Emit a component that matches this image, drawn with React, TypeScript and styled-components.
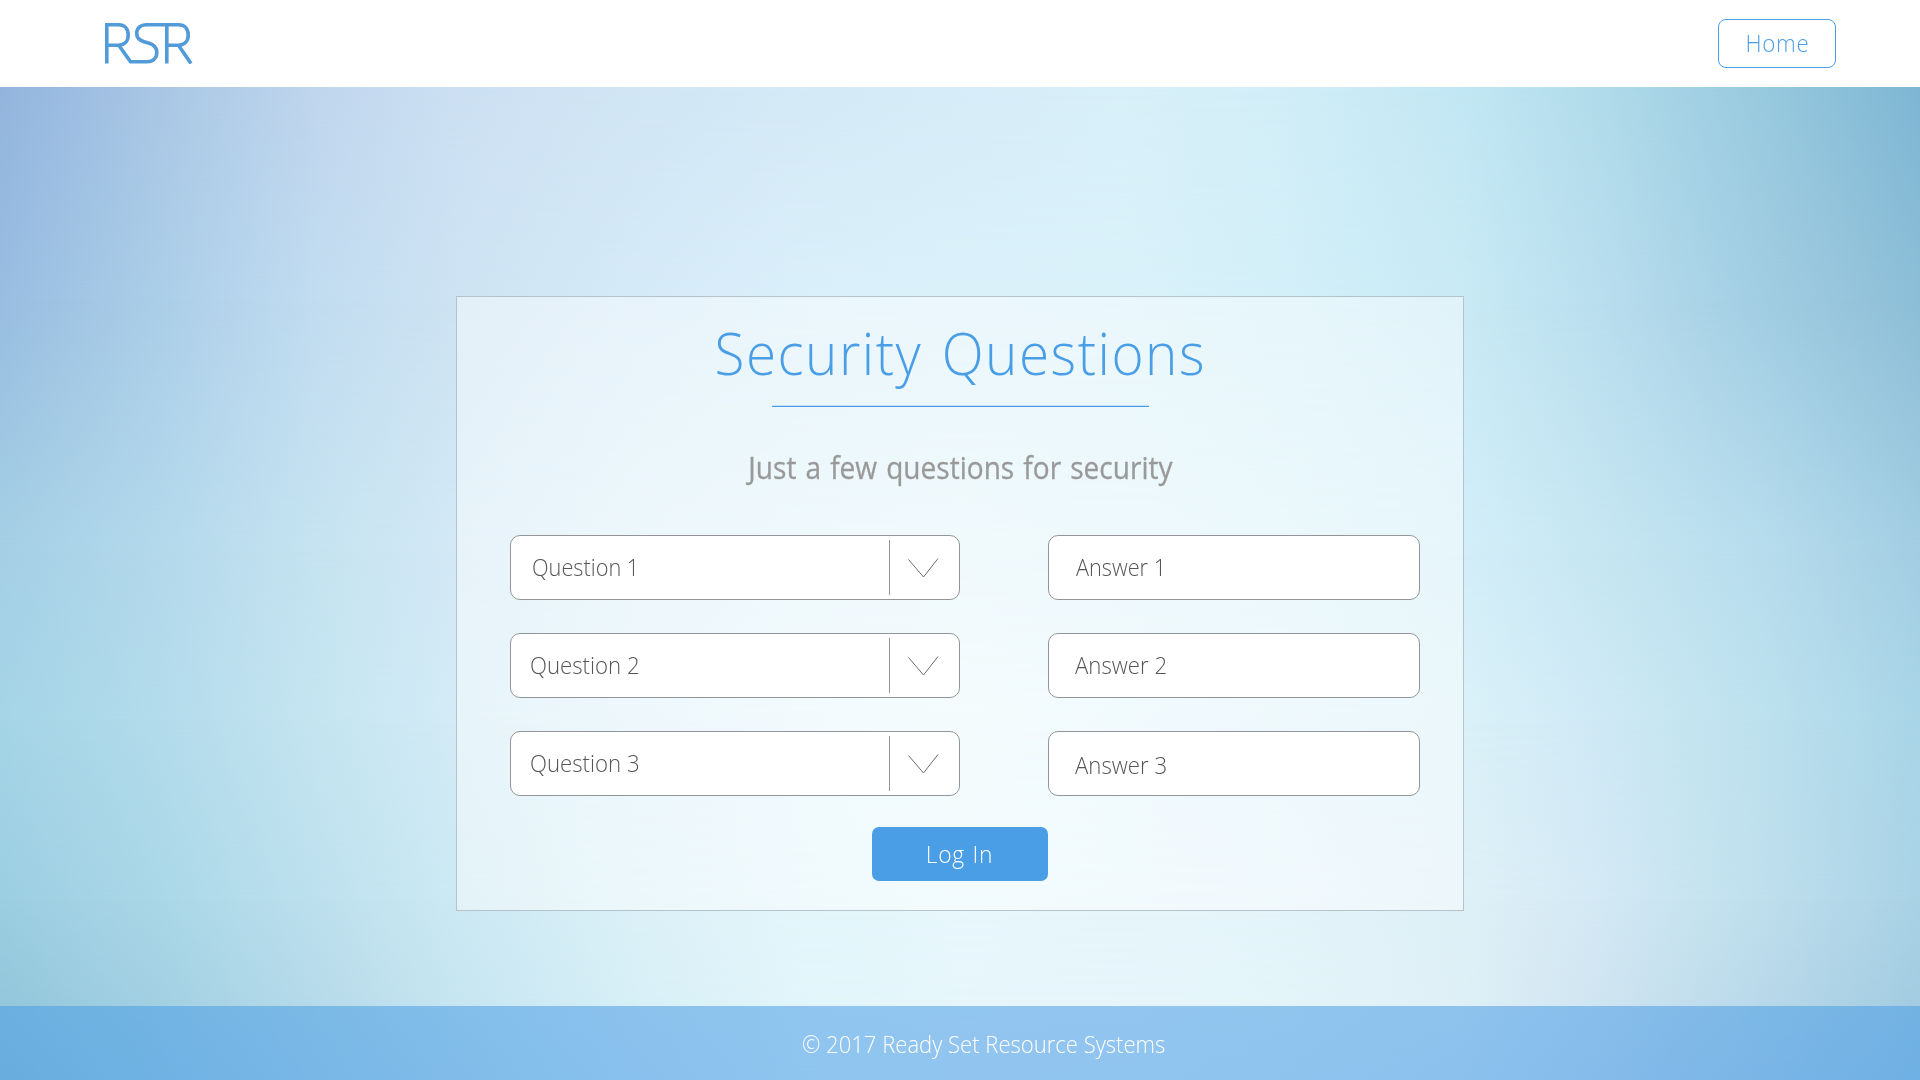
import React from "react";
import styled, { createGlobalStyle } from "styled-components";

const GlobalStyle = createGlobalStyle`
  *, *::before, *::after { box-sizing: border-box; }
  html, body { margin: 0; padding: 0; }
  body { font-family: "Open Sans", "Noto Sans", sans-serif; font-weight: 300; overflow: hidden; }
`;

const BLUE = "#4a9ee6";

/* Backdrop: rows of horizontal colour stops, each fading into the next. */
const STOPS = [0, 160, 320, 456, 640, 800, 960, 1120, 1280, 1464, 1600, 1760, 1920];
const ROWS: { y: number; colors: string[] }[] = [
  { y: 87, colors: ["#93b5de", "#a9c7e5", "#c0d6ed", "#cce0f3", "#d1e6f5", "#d4eaf6", "#d6edf8", "#d8f0f9", "#d2eef7", "#c2e7f4", "#b1dbea", "#98cadf", "#7fb6d3"] },
  { y: 300, colors: ["#98bde0", "#abcee8", "#c2dcf0", "#cde3f3", "#d5eaf7", "#d9eff9", "#daf1fa", "#d9f1f9", "#d3eff8", "#c8eaf5", "#b9deee", "#a2cde2", "#8cbed7"] },
  { y: 550, colors: ["#a5cfe5", "#b3d9eb", "#c6e3f1", "#d3e9f5", "#def1f9", "#e2f4f9", "#e4f5fa", "#e0f4fa", "#dbf3f9", "#d3eef8", "#c6e6f2", "#b7dded", "#a3cde2"] },
  { y: 720, colors: ["#a4d5e6", "#b3dbeb", "#c5e5f1", "#d3ebf5", "#e0f2f9", "#e7f6fb", "#ebf8fb", "#e6f6fb", "#e1f4fa", "#daf1f8", "#cfe9f5", "#bde1ee", "#a9d5e7"] },
  { y: 900, colors: ["#9bcee1", "#aad7e7", "#bde0ee", "#cce9f3", "#dcf1f8", "#e3f6fb", "#e8f7fc", "#e6f6fb", "#e4f4fa", "#def0f7", "#d3e9f4", "#bfdfed", "#a9d2e5"] },
  { y: 1006, colors: ["#93c6db", "#a2d0e2", "#b6dae9", "#c6e5f0", "#d7eff6", "#e1f5fa", "#e6f6fb", "#e6f5fb", "#e3f4f9", "#deeff6", "#cfe4f0", "#b8d8e9", "#a2cbe0"] },
  { y: 1080, colors: ["#8dbfd6", "#9ccbe0", "#afd5e9", "#c0dfee", "#d2ebf5", "#dff2f9", "#e4f4fa", "#e3f3fa", "#dff0f8", "#d8eaf5", "#c8def0", "#b2d1e8", "#9bc5e0"] },
];

const rowGradient = (colors: string[]) =>
  `linear-gradient(90deg, ${colors.map((c, i) => `${c} ${STOPS[i]}px`).join(", ")})`;

const Page = styled.div`
  display: grid;
  grid-template: 1080px / 1920px;
  width: 1920px;
  height: 1080px;
  overflow: hidden;
`;

const Wash = styled.div<{ $colors: string[]; $from?: number; $to: number }>`
  grid-area: 1 / 1;
  background: ${(p) => rowGradient(p.$colors)};
  ${(p) =>
    p.$from !== undefined &&
    `mask-image: linear-gradient(180deg, transparent ${p.$from}px, #000 ${p.$to}px);`}
`;

const Screen = styled.div`
  grid-area: 1 / 1;
  z-index: 1;
  display: grid;
  grid-template-rows: 87px 1fr 74px;
`;

/* Slightly condensed lettering. */
const Narrow = styled.span<{ $x: number; $origin?: string }>`
  display: inline-block;
  transform: scaleX(${(p) => p.$x});
  transform-origin: ${(p) => p.$origin ?? "center"};
  white-space: nowrap;
`;

const Header = styled.header`
  display: flex;
  justify-content: space-between;
  align-items: flex-start;
  padding: 19px 84px 0 105px;
  background: #fff;
`;

const Logo = styled.svg`
  display: block;
  margin-top: 4px;
`;

const HomeButton = styled.button`
  width: 118px;
  height: 49px;
  padding: 0 0 2px;
  border: 1px solid ${BLUE};
  border-radius: 8px;
  background: #fff;
  color: ${BLUE};
  font: 300 24px/44px "Open Sans", sans-serif;
  letter-spacing: 0.8px;
`;

const Main = styled.main`
  display: flex;
  justify-content: center;
  align-items: flex-start;
  padding-top: 209px;
`;

const Card = styled.section`
  width: 1008px;
  height: 615px;
  display: flex;
  flex-direction: column;
  align-items: center;
  border: 1px solid #b5c4cb;
  background: rgba(255, 255, 255, 0.45);
  background-clip: padding-box;
`;

const Title = styled.h1`
  margin: 13px 0 0;
  height: 95px;
  color: ${BLUE};
  font-size: 59px;
  line-height: 84px;
  font-weight: 300;
  letter-spacing: 1.6px;
  word-spacing: 4px;
`;

const Rule = styled.hr`
  width: 377px;
  height: 2px;
  margin: 0;
  border: 0;
  background: linear-gradient(#c4def5 50%, ${BLUE} 50%);
`;

const Subtitle = styled.p`
  margin: 39px 0 0;
  height: 89px;
  color: #999;
  font-size: 31px;
  line-height: 42px;
  font-weight: 400;
  -webkit-text-stroke: 0.3px #999;
  word-spacing: 2px;
`;

const Fields = styled.div`
  align-self: stretch;
  display: grid;
  grid-template-columns: 450px 372px;
  grid-auto-rows: 65px;
  column-gap: 88px;
  row-gap: 33px;
  padding-left: 53px;
`;

const Field = styled.div<{ $inset: number }>`
  display: flex;
  align-items: center;
  justify-content: space-between;
  padding-left: ${(p) => p.$inset}px;
  border: 1px solid #929699;
  border-radius: 10px;
  background: #fff;
  color: #555;
`;

const Label = styled.span<{ $drop?: number }>`
  font-size: 24px;
  line-height: 32px;
  padding-top: ${(p) => p.$drop ?? 0}px;
  padding-bottom: 1px;
`;

const Toggle = styled.span`
  display: flex;
  align-items: center;
  width: 70px;
  height: 55px;
  padding-left: 17px;
  border-left: 1px solid #929699;
`;

const LoginButton = styled.button`
  width: 176px;
  height: 54px;
  margin-top: 31px;
  padding: 0;
  border: 0;
  border-radius: 7px;
  background: ${BLUE};
  color: #fff;
  font: 300 24px/50px "Open Sans", sans-serif;
  letter-spacing: 0.8px;
  word-spacing: 1px;
`;

const Footer = styled.footer`
  padding: 22px 0 0 802px;
  background: rgba(74, 157, 230, 0.54);
  color: #fff;
  font-size: 24px;
  line-height: 32px;
`;

const Chevron = () => (
  <svg width="32" height="22" viewBox="0 0 32 22" fill="none" stroke="#6d6d6d" strokeWidth="1">
    <path d="M1.500 2.500L16.500 20L31 1.500" />
  </svg>
);

const items = [
  { q: "Question 1", a: "Answer 1", qInset: 21, aInset: 27, drop: 0, x: 0.905 },
  { q: "Question 2", a: "Answer 2", qInset: 19, aInset: 25.5, drop: 0, x: 0.925 },
  { q: "Question 3", a: "Answer 3", qInset: 19, aInset: 25.5, drop: 4, x: 0.925 },
];

export default function App() {
  return (
    <Page>
      <GlobalStyle />
      {ROWS.map((row, i) => (
        <Wash key={row.y} $colors={row.colors} $from={i ? ROWS[i - 1].y : undefined} $to={row.y} />
      ))}
      <Screen>
        <Header>
          <Logo width="88" height="41" viewBox="0 0 88 41" fill="none" stroke="#509bd8" strokeWidth="3.6">
            <path d="M1.800 40.500V1.800H13.500C20 1.800 23.200 6 23.200 12C23.200 18 19.500 22.200 13.500 22.200H1.800" />
            <path d="M13.800 22.200L25.500 38.700H42C48.500 38.700 51.800 34.500 51.800 29.500C51.800 24.500 49 21.500 43.500 20L39 18.700C34.500 17.300 31.700 15 31.700 10.500C31.700 5 35.500 1.800 41 1.800H73.500C80 1.800 83.200 6 83.200 12C83.200 18 79.500 22.200 73.500 22.200H61.800" />
            <path d="M61.800 1.800V40.500M73.500 22.200L86 40.500" />
          </Logo>
          <HomeButton>
            <Narrow $x={0.93}>Home</Narrow>
          </HomeButton>
        </Header>
        <Main>
          <Card>
            <Title>
              <Narrow $x={0.93}>Security Questions</Narrow>
            </Title>
            <Rule />
            <Subtitle>
              <Narrow $x={0.905}>Just a few questions for security</Narrow>
            </Subtitle>
            <Fields>
              {items.map((it) => (
                <React.Fragment key={it.q}>
                  <Field $inset={it.qInset}>
                    <Label>
                      <Narrow $x={it.x} $origin="left">{it.q}</Narrow>
                    </Label>
                    <Toggle>
                      <Chevron />
                    </Toggle>
                  </Field>
                  <Field $inset={it.aInset}>
                    <Label $drop={it.drop}>
                      <Narrow $x={it.x} $origin="left">{it.a}</Narrow>
                    </Label>
                  </Field>
                </React.Fragment>
              ))}
            </Fields>
            <LoginButton>
              <Narrow $x={0.95}>Log In</Narrow>
            </LoginButton>
          </Card>
        </Main>
        <Footer>
          <Narrow $x={0.919} $origin="left">© 2017 Ready Set Resource Systems</Narrow>
        </Footer>
      </Screen>
    </Page>
  );
}
